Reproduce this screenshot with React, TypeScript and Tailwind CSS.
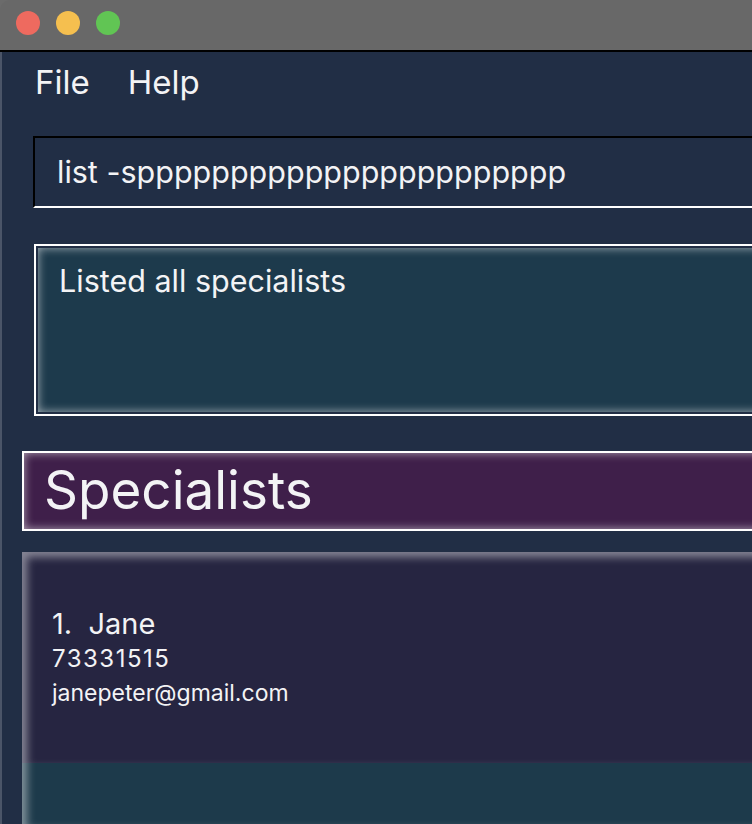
import React from "react";

const font = { fontFamily: "Inter, 'Noto Sans', sans-serif" };

const TrafficLights = () => (
  <div className="flex items-center gap-[16px] pl-[16px] pb-[4px]">
    <span className="w-[24px] h-[24px] rounded-full bg-[#ee6a5f]" />
    <span className="w-[24px] h-[24px] rounded-full bg-[#f5bf4f]" />
    <span className="w-[24px] h-[24px] rounded-full bg-[#61c554]" />
  </div>
);

const App = () => {
  return (
    <div
      className="w-[752px] h-[824px] overflow-hidden bg-[#6b6b6b] text-[#f3f3f5]"
      style={font}
    >
      <div className="h-[52px] flex items-center rounded-tl-[10px] bg-[#686868] border-b-2 border-black">
        <TrafficLights />
      </div>

      {/* panels run past the right edge of the shot */}
      <div className="w-[820px] h-[772px] flex flex-col bg-[#212e45] border-l-2 border-[#4b5568] whitespace-nowrap">
        {/* menu */}
        <div className="flex gap-[38px] pl-[33px] pt-[6px] h-[84px] text-[33px]">
          <span>File</span>
          <span>Help</span>
        </div>

        {/* command box */}
        <div className="ml-[31px] h-[72px] flex items-center pl-[22px] border-t-2 border-l-2 border-b-2 border-t-black border-l-black border-b-white text-[30.5px]">
          list -sppppppppppppppppppppppp
        </div>

        {/* result display */}
        <div className="ml-[32px] mt-[36px] h-[172px] border-2 border-white p-[2px]">
          <div className="h-full bg-[#1d3a4c] shadow-[inset_0_0_10px_rgba(255,255,255,0.6)] pl-[21px] pt-[10px] text-[30.5px]">
            Listed all specialists
          </div>
        </div>

        {/* header */}
        <div className="ml-[20px] mt-[35px] h-[80px] border-2 border-white">
          <div className="h-full bg-[#3f1f4a] shadow-[inset_0_0_10px_rgba(255,255,255,0.6)] pl-[20px] flex items-center text-[53px]">
            Specialists
          </div>
        </div>

        {/* list */}
        <div className="ml-[20px] mt-[21px] flex-1 flex flex-col bg-[#1d3a4b] shadow-[inset_5px_5px_8px_rgba(255,255,255,0.45)]">
          <div className="h-[211px] bg-[#262541] shadow-[inset_5px_5px_8px_rgba(255,255,255,0.45)] pl-[30px] pt-[54px]">
            <div className="text-[29px] leading-[36px]">1.&nbsp; Jane</div>
            <div className="text-[24px] leading-[34px] tracking-[1.5px]">73331515</div>
            <div className="text-[23px] leading-[34px]">janepeter@gmail.com</div>
          </div>
        </div>
      </div>
    </div>
  );
};

export default App;
